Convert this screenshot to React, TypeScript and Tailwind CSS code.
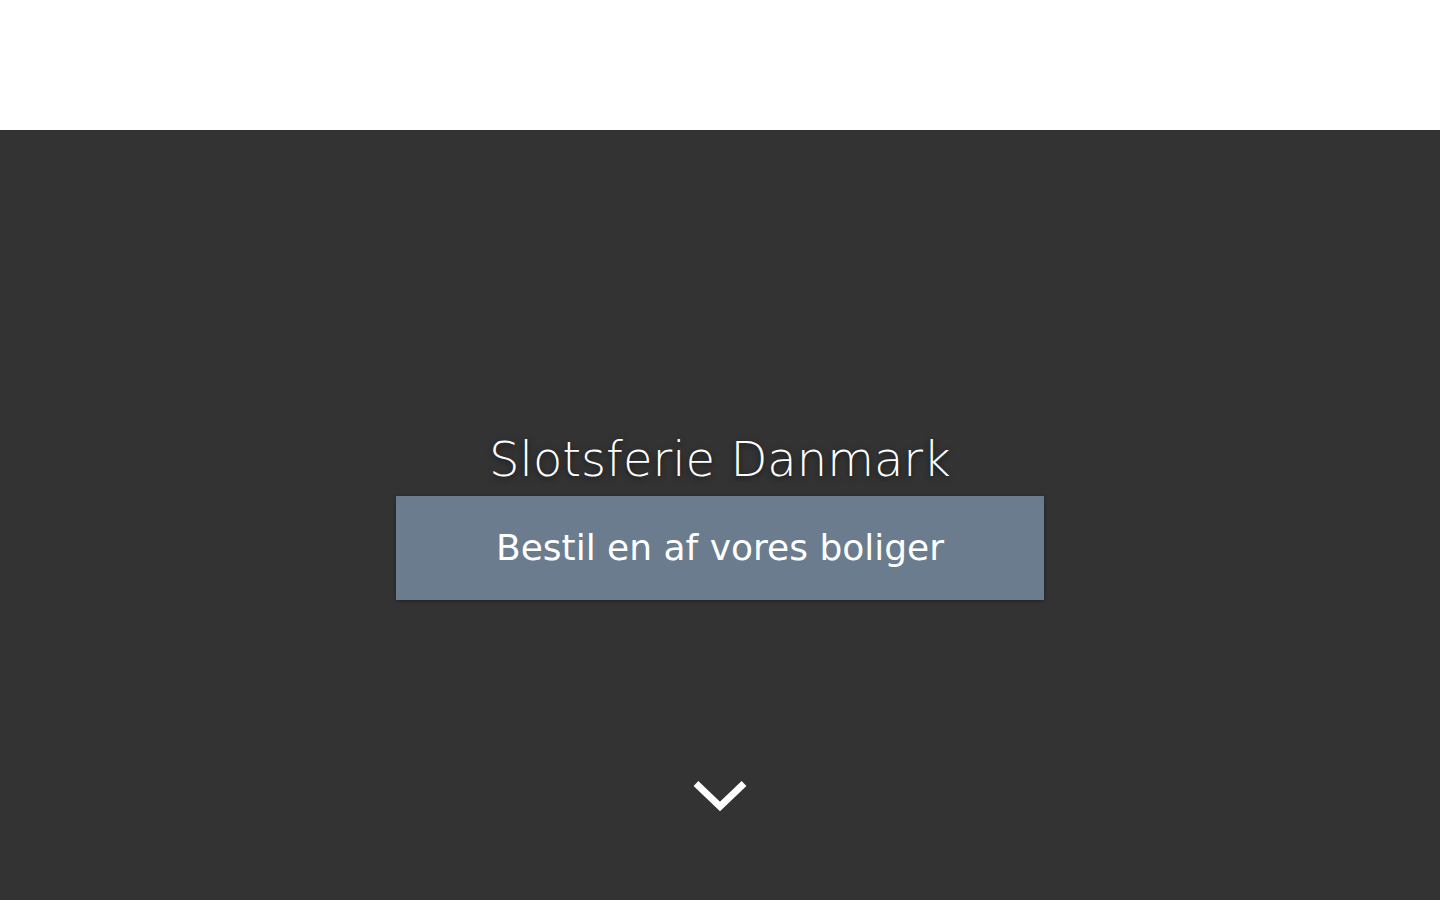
export default function App() {
  return (
    <div className="w-full h-[900px] flex flex-col" style={{ fontFamily: '"DejaVu Sans", sans-serif' }}>
      <header className="h-[130px] bg-white shrink-0" />
      <section className="relative flex-1 bg-[#333333] flex flex-col items-center justify-center">
        <h1 className="text-[48px] leading-[58px] font-extralight text-white mb-2 [text-shadow:0_2px_6px_rgba(0,0,0,0.6)]">
          Slotsferie Danmark
        </h1>
        <a className="w-[648px] h-[104px] bg-[#6a7c8e] flex items-center justify-center text-white text-[36px] shadow-[0_1px_4px_rgba(0,0,0,0.35)]">
          Bestil en af vores boliger
        </a>
        <div className="absolute bottom-[82px] left-1/2 -translate-x-1/2">
          <svg width="60" height="40" viewBox="0 0 60 40" fill="none">
            <path d="M8.5 8 L30 28.5 L51.5 8" stroke="white" strokeWidth="7" strokeLinecap="square" />
          </svg>
        </div>
      </section>
    </div>
  );
}
